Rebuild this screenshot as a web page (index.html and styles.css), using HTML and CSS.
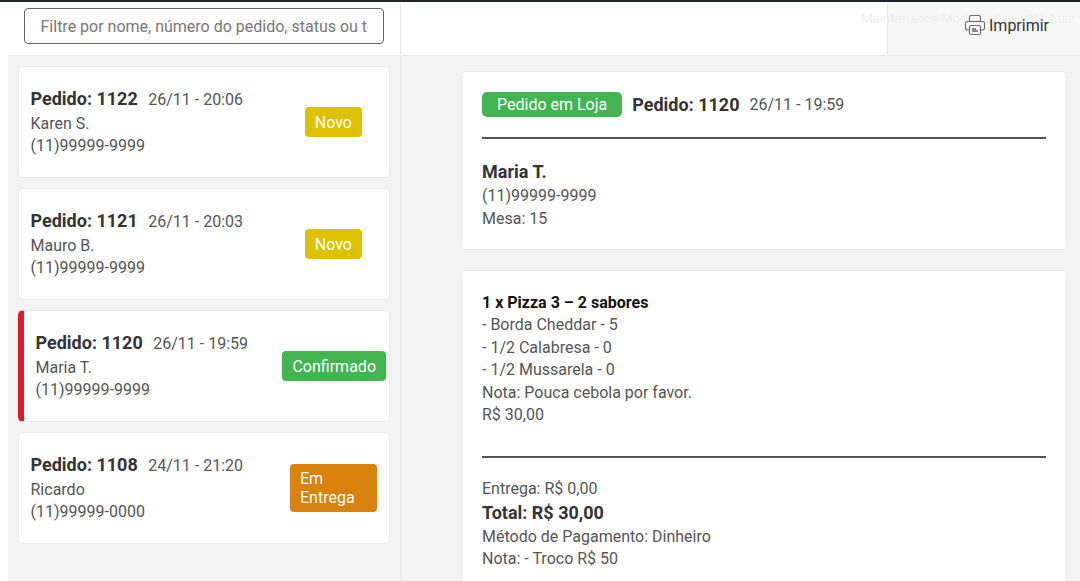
FILE: index.html
```html
<!DOCTYPE html>
<html lang="pt-BR">
<head>
<meta charset="utf-8">
<title>Pedidos</title>
<link rel="stylesheet" href="styles.css">
</head>
<body>
<div class="topbar"></div>
<div class="app">
  <aside class="side">
    <div class="filter-wrap">
      <input class="filter" type="text" placeholder="Filtre por nome, número do pedido, status ou telefone">
    </div>
    <div class="orders">
      <article class="order">
        <div class="order-info">
          <div class="order-head"><strong class="num">Pedido: 1122</strong><span class="date">26/11 - 20:06</span></div>
          <div>Karen S.</div>
          <div>(11)99999-9999</div>
        </div>
        <span class="badge novo">Novo</span>
      </article>
      <article class="order">
        <div class="order-info">
          <div class="order-head"><strong class="num">Pedido: 1121</strong><span class="date">26/11 - 20:03</span></div>
          <div>Mauro B.</div>
          <div>(11)99999-9999</div>
        </div>
        <span class="badge novo">Novo</span>
      </article>
      <article class="order active">
        <div class="order-info">
          <div class="order-head"><strong class="num">Pedido: 1120</strong><span class="date">26/11 - 19:59</span></div>
          <div>Maria T.</div>
          <div>(11)99999-9999</div>
        </div>
        <span class="badge conf">Confirmado</span>
      </article>
      <article class="order">
        <div class="order-info">
          <div class="order-head"><strong class="num">Pedido: 1108</strong><span class="date">24/11 - 21:20</span></div>
          <div>Ricardo</div>
          <div>(11)99999-0000</div>
        </div>
        <span class="badge entrega">Em<br>Entrega</span>
      </article>
    </div>
  </aside>
  <main class="main">
    <header class="main-top">
      <div class="spacer"></div>
      <div class="print-box">
        <span class="maint">Maintenance Mode Active - Olá, Luiz</span>
        <button class="print" type="button">
          <svg class="print-icon" width="20" height="20" viewBox="0 0 20 20" fill="none" stroke="#6a6a6a" stroke-width="1.1">
            <path d="M4.5 6.5V2.5a2 2 0 0 1 2-2h7a2 2 0 0 1 2 2v4"/>
            <path d="M4.5 15H2.5a2 2 0 0 1-2-2V8.500a2 2 0 0 1 2-2h15a2 2 0 0 1 2 2V13a2 2 0 0 1-2 2h-2"/>
            <rect x="4.500" y="10.500" width="11" height="9" rx="1.500"/>
            <path d="M7 14h4M7 16h6" stroke-width="1.600"/>
          </svg>
          <span>Imprimir</span>
        </button>
      </div>
    </header>
    <div class="detail">
      <section class="card card-head">
        <div class="title-row">
          <span class="tag">Pedido em Loja</span>
          <strong class="num">Pedido: 1120</strong>
          <span class="date">26/11 - 19:59</span>
        </div>
        <hr class="rule">
        <div class="cust"><strong class="num">Maria T.</strong></div>
        <div>(11)99999-9999</div>
        <div>Mesa: 15</div>
      </section>
      <section class="card card-items">
        <div class="item-title">1 x Pizza 3 – 2 sabores</div>
        <div>- Borda Cheddar - 5</div>
        <div>- 1/2 Calabresa - 0</div>
        <div>- 1/2 Mussarela - 0</div>
        <div>Nota: Pouca cebola por favor.</div>
        <div>R$ 30,00</div>
        <hr class="rule rule-items">
        <div>Entrega: R$ 0,00</div>
        <div class="total">Total: R$ 30,00</div>
        <div>Método de Pagamento: Dinheiro</div>
        <div>Nota: - Troco R$ 50</div>
      </section>
    </div>
  </main>
</div>
</body>
</html>
```
FILE: styles.css
```css
* { box-sizing: border-box; }
html, body { height: 100%; }
body {
  margin: 0;
  background: #fff;
  font-family: Roboto, "Liberation Sans", sans-serif;
  font-size: 16px;
  line-height: 22.5px;
  color: #555;
  overflow: hidden;
}
.topbar { height: 2px; background: #212529; }
.app {
  display: flex;
  height: 579px;
  margin-left: 8px;
  background: #f3f3f3;
}
.side {
  flex: 0 0 393px;
  border-right: 1px solid #e8e8e8;
}
.filter-wrap {
  height: 54px;
  padding: 6px 16px 0;
  background: #fff;
  border-bottom: 1px solid #e8e8e8;
}
.filter {
  display: block;
  width: 360px;
  height: 36px;
  padding: 0 15.5px;
  border: 1px solid #666;
  border-radius: 4px;
  font: 16px Roboto, "Liberation Sans", sans-serif;
  color: #555;
}
.filter::placeholder { color: #777; opacity: 1; }
.orders {
  display: flex;
  flex-direction: column;
  gap: 10px;
  padding: 10px 10px 0;
}
.order {
  display: flex;
  align-items: center;
  justify-content: space-between;
  height: 112px;
  padding: 0 27px 0 11.5px;
  background: #fff;
  border: 1px solid #ebebeb;
  border-radius: 5px;
}
.order.active {
  padding: 0 3px 0 11.5px;
  border-left: 6px solid #e01a2b;
}
.order-info { padding-top: 3px; }
.order-head { display: flex; align-items: baseline; gap: 10.5px; margin: -1px 0 1px; }
.num { font-size: 18px; font-weight: 700; color: #333; }
.date { color: #555; }
.badge {
  padding: 5px 10px 3px;
  border-radius: 4px;
  color: #fff;
  font-size: 16px;
  line-height: 22px;
}
.novo { background: #dcc200; }
.conf { background: #43b452; }
.entrega { width: 87px; line-height: 19px; padding: 5px 10px; background: #d9820e; margin-right: -15px; }
.main { flex: 1; min-width: 0; }
.main-top {
  display: flex;
  height: 54px;
  background: #fff;
  border-bottom: 1px solid #e8e8e8;
}
.spacer { flex: 1; }
.print-box {
  position: relative;
  flex: 0 0 193px;
  background: #f7f7f7;
  border-left: 1px solid #e8e8e8;
}
.maint {
  position: absolute;
  top: 6px;
  left: -27px;
  white-space: nowrap;
  font-size: 13.3px;
  color: #efefef;
}
.print {
  position: absolute;
  top: 14px;
  left: 77px;
  display: flex;
  align-items: center;
  gap: 4px;
  padding: 0;
  border: 0;
  background: none;
  font: 16px Roboto, "Liberation Sans", sans-serif;
  color: #333;
}
.print-icon { margin-top: -1px; }
.detail {
  display: flex;
  flex-direction: column;
  gap: 20px;
  padding: 15px 13px 0 60px;
}
.card {
  background: #fff;
  border: 1px solid #ebebeb;
  border-radius: 5px;
  padding: 20px;
}
.card-head { height: 179px; }
.title-row { display: flex; align-items: center; gap: 10px; height: 27px; }
.tag {
  align-self: flex-start;
  padding: 0 15px;
  height: 25px;
  line-height: 26px;
  border-radius: 5px;
  color: #fff;
  background: #43b452;
}
.rule { margin: 18px 0 21px; border: 0; border-top: 2px solid #555; }
.cust { line-height: 24px; }
.card-items { height: 330px; padding-top: 20.5px; }
.item-title { font-weight: 700; color: #111; }
.rule-items { margin: 29.5px 0 20px; }
.total { font-size: 18px; font-weight: 700; color: #333; line-height: 25px; margin: -1px 0 1px; }
```
